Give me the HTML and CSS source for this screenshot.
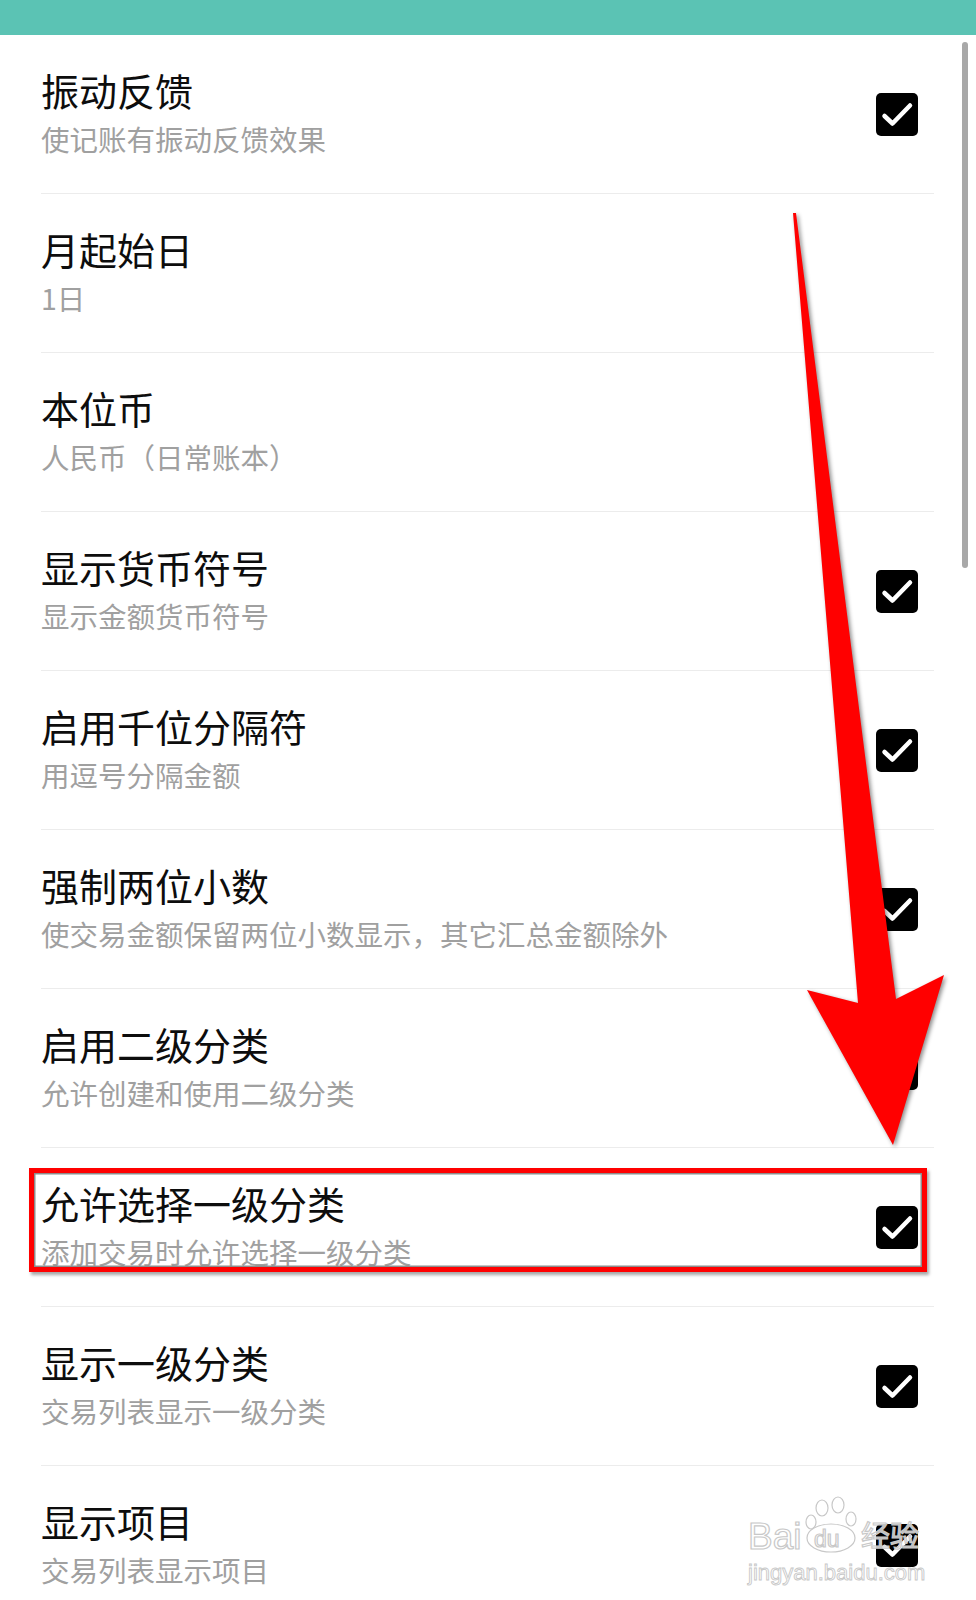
FILE: index.html
```html
<!DOCTYPE html>
<html lang="zh-CN">
    <head>
        <meta charset="UTF-8">
        <meta name="viewport" content="width=device-width, initial-scale=1.0">
        <title>设置</title>
        <link rel="stylesheet" href="styles.css">
    </head>
    <body>
        <div class="screen">
            <div class="appbar"></div>

            <ul class="prefs">
                <li class="pref">
                    <div class="text">
                        <div class="title">振动反馈</div>
                        <div class="summary">使记账有振动反馈效果</div>
                    </div>
                    <span class="check"><svg viewBox="0 0 42 43"><polyline points="8.5,23 16.5,30.5 34,12.5"/></svg></span>
                </li>
                <li class="pref">
                    <div class="text">
                        <div class="title">月起始日</div>
                        <div class="summary">1日</div>
                    </div>
                </li>
                <li class="pref">
                    <div class="text">
                        <div class="title">本位币</div>
                        <div class="summary">人民币（日常账本）</div>
                    </div>
                </li>
                <li class="pref">
                    <div class="text">
                        <div class="title">显示货币符号</div>
                        <div class="summary">显示金额货币符号</div>
                    </div>
                    <span class="check"><svg viewBox="0 0 42 43"><polyline points="8.5,23 16.5,30.5 34,12.5"/></svg></span>
                </li>
                <li class="pref">
                    <div class="text">
                        <div class="title">启用千位分隔符</div>
                        <div class="summary">用逗号分隔金额</div>
                    </div>
                    <span class="check"><svg viewBox="0 0 42 43"><polyline points="8.5,23 16.5,30.5 34,12.5"/></svg></span>
                </li>
                <li class="pref">
                    <div class="text">
                        <div class="title">强制两位小数</div>
                        <div class="summary">使交易金额保留两位小数显示，其它汇总金额除外</div>
                    </div>
                    <span class="check"><svg viewBox="0 0 42 43"><polyline points="8.5,23 16.5,30.5 34,12.5"/></svg></span>
                </li>
                <li class="pref">
                    <div class="text">
                        <div class="title">启用二级分类</div>
                        <div class="summary">允许创建和使用二级分类</div>
                    </div>
                    <span class="check"><svg viewBox="0 0 42 43"><polyline points="8.5,23 16.5,30.5 34,12.5"/></svg></span>
                </li>
                <li class="pref marked">
                    <div class="text">
                        <div class="title">允许选择一级分类</div>
                        <div class="summary">添加交易时允许选择一级分类</div>
                    </div>
                    <span class="check"><svg viewBox="0 0 42 43"><polyline points="8.5,23 16.5,30.5 34,12.5"/></svg></span>
                </li>
                <li class="pref">
                    <div class="text">
                        <div class="title">显示一级分类</div>
                        <div class="summary">交易列表显示一级分类</div>
                    </div>
                    <span class="check"><svg viewBox="0 0 42 43"><polyline points="8.5,23 16.5,30.5 34,12.5"/></svg></span>
                </li>
                <li class="pref">
                    <div class="text">
                        <div class="title">显示项目</div>
                        <div class="summary">交易列表显示项目</div>
                    </div>
                    <span class="check"><svg viewBox="0 0 42 43"><polyline points="8.5,23 16.5,30.5 34,12.5"/></svg></span>
                </li>
            </ul>

            <div class="scrollbar"></div>

            <!-- annotation layer: arrow + watermark -->
            <svg class="overlay" viewBox="0 0 976 1600">
                <polygon class="arrow" points="793,213 858,1003 807,990 893,1145 944,975 896,999 796,213"/>
                <g class="watermark">
                    <ellipse cx="811" cy="1522" rx="5" ry="7"/>
                    <ellipse cx="822" cy="1508" rx="6" ry="8"/>
                    <ellipse cx="838" cy="1505" rx="6" ry="8"/>
                    <ellipse cx="851" cy="1519" rx="5" ry="7"/>
                    <ellipse cx="831" cy="1538" rx="24" ry="14"/>
                    <text x="748" y="1549" class="wm-big">Bai</text>
                    <text x="814" y="1547" class="wm-du">du</text>
                    <text x="861" y="1547" class="wm-cn">经验</text>
                    <text x="748" y="1580" class="wm-url">jingyan.baidu.com</text>
                </g>
            </svg>
        </div>
    </body>
</html>
```

FILE: styles.css
```css
body {
    margin: 0;
    background: #ffffff;
    font-family: "Noto Sans CJK SC", "Noto Sans", sans-serif;
}
.screen {
    position: relative;
    width: 976px;
    height: 1600px;
    overflow: hidden;
}
.appbar {
    height: 35px;
    background-color: #5bc3b4;
}
.prefs {
    list-style: none;
    margin: 0;
    padding: 0;
}
.pref {
    position: relative;
    display: flex;
    align-items: center;
    justify-content: space-between;
    height: 159px;
    box-sizing: border-box;
    margin: 0 42px 0 41px;
    border-bottom: 1px solid #ececec;
}
.text {
    align-self: flex-start;
    padding-top: 30px;
}
.title {
    font-size: 38px;
    line-height: 50px;
    color: #0d0d0d;
}
.summary {
    font-size: 28.5px;
    line-height: 40px;
    margin-top: 4px;
    color: #a0a0a0;
    white-space: nowrap;
}
.check {
    width: 42px;
    height: 43px;
    margin-right: 16px;
    background: #000;
    border-radius: 5px;
    flex-shrink: 0;
}
.check svg {
    display: block;
    width: 42px;
    height: 43px;
    fill: none;
    stroke: #fff;
    stroke-width: 4.5;
    stroke-linecap: round;
    stroke-linejoin: round;
}
.marked::after {
    content: "";
    position: absolute;
    left: -12px;
    right: 7px;
    top: 20px;
    height: 104px;
    box-sizing: border-box;
    border: 5px solid #ff0000;
    box-shadow: inset 0 0 0 1.5px #8c8c8c, 2px 3px 3px rgba(0, 0, 0, 0.35);
}
.scrollbar {
    position: absolute;
    top: 42px;
    left: 962px;
    width: 6px;
    height: 526px;
    border-radius: 3px;
    background: #a8a8a8;
}
.overlay {
    position: absolute;
    top: 0;
    left: 0;
    width: 976px;
    height: 1600px;
    pointer-events: none;
}
.arrow {
    fill: #ff0000;
    filter: drop-shadow(2px 2px 2px rgba(0, 0, 0, 0.45));
}
.watermark {
    fill: rgba(255, 255, 255, 0.75);
    stroke: #c8c8c8;
    stroke-width: 1.2;
    font-family: "Liberation Sans", sans-serif;
}
.wm-big {
    font-size: 37px;
}
.wm-du {
    font-size: 23px;
}
.wm-cn {
    font-family: "Noto Sans CJK SC", sans-serif;
    font-size: 29px;
}
.wm-url {
    font-size: 22px;
    stroke-width: 0.9;
}
```
